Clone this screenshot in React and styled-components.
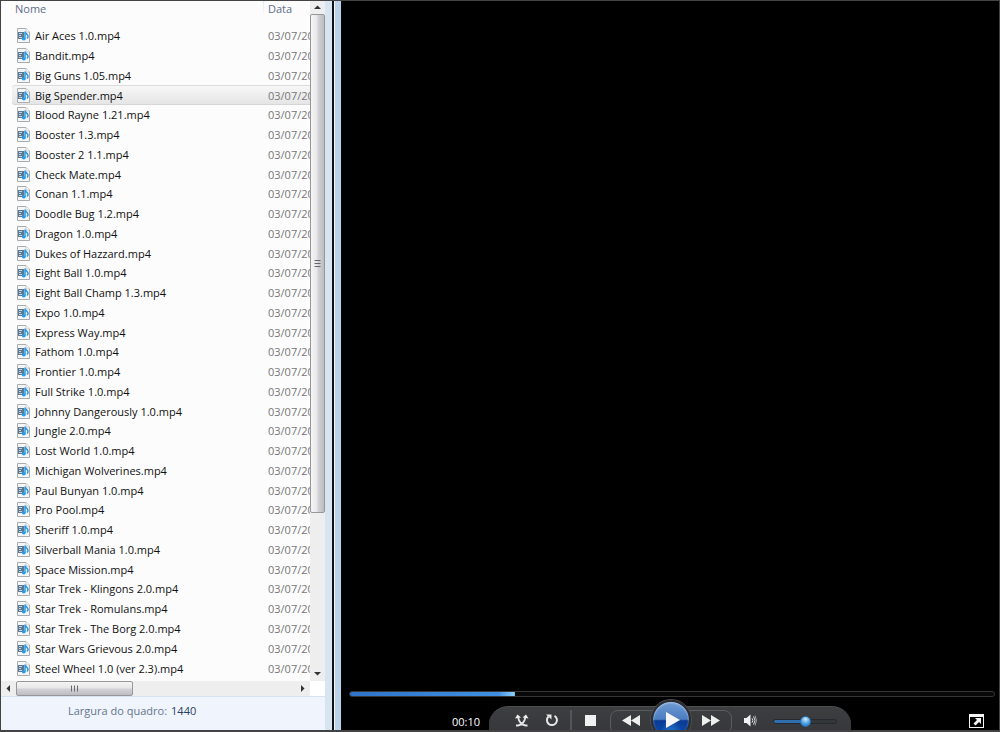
import React, { useState } from 'react';
import styled, { createGlobalStyle } from 'styled-components';

const GlobalStyle = createGlobalStyle`
  * {
    box-sizing: border-box;
  }
  body {
    margin: 0;
    background: #000;
    font-family: 'Open Sans', 'Noto Sans', sans-serif;
    font-size: 11px;
  }
  button {
    border: 0;
    padding: 0;
    background: none;
    cursor: pointer;
  }
`;

const Window = styled.div`
  display: flex;
  height: 100vh;
  min-height: 400px;
  overflow: hidden;
  border: solid #434343;
  border-width: 1px 1px 2px 1px;
`;

const Sidebar = styled.section`
  flex: 0 0 331px;
  display: flex;
  flex-direction: column;
  background: #fcfcfc;
  border-right: 7px solid #d7e5f2;
`;

const Browser = styled.div`
  flex: 1 1 auto;
  min-height: 0;
  display: grid;
  grid-template-columns: 1fr 15px;
  grid-template-rows: minmax(0, 1fr) 15px;
`;

const ListArea = styled.div`
  overflow: hidden;
  padding-left: 11px;
  padding-bottom: 3px;
`;

const Table = styled.table`
  width: 100%;
  height: 100%;
  table-layout: fixed;
  border-collapse: separate;
  border-spacing: 0;
`;

const HeadCell = styled.th`
  width: ${props => props.$width || 'auto'};
  height: 25px;
  padding: 0 0 0 3px;
  vertical-align: top;
  text-align: left;
  font-weight: normal;
  line-height: 15px;
  color: #5d6c8b;

  & + & {
    padding-left: 5px;
    background: linear-gradient(#dfeaf5, #fcfcfc) no-repeat 0 0 / 1px 16px;
  }
`;

const Cell = styled.td`
  padding: 0;
  overflow: hidden;
  white-space: nowrap;
  line-height: 15px;
  color: ${props => (props.$muted ? '#777' : '#111')};
  padding-left: 5px;
`;

const Row = styled.tr`
  cursor: default;

  ${Cell} {
    ${props => props.$selected && `
      background: linear-gradient(#f8f8f8, #e4e4e4);
      box-shadow: inset 0 1px #dcdcdc, inset 0 -1px #d6d6d6;
    `}
  }
  ${Cell}:first-child {
    border-radius: 3px 0 0 3px;
  }
`;

const FileName = styled.span`
  display: flex;
  align-items: center;
  gap: 5px;
`;

const ScrollBar = styled.div`
  display: flex;
  flex-direction: ${props => (props.$horizontal ? 'row' : 'column')};
  justify-content: space-between;
  background: #eeeeee;
  overflow: hidden;
`;

const ScrollButton = styled.button`
  flex: 0 0 ${props => props.$size || '15px'};
  display: flex;
  align-items: center;
  justify-content: center;
`;

const ScrollTrack = styled.div`
  flex: 1 1 auto;
  display: flex;
  flex-direction: inherit;
`;

const Thumb = styled.div`
  flex: 0 0 ${props => props.$length};
  display: flex;
  align-items: center;
  justify-content: center;
  border: 1px solid #979797;
  border-radius: 2px;
  background: linear-gradient(
    ${props => (props.$horizontal ? 'to bottom' : 'to right')},
    #f5f5f5, #e7e7e9 45%, #d2d2d6 55%, #bcbcc2
  );
`;

const Corner = styled.div`
  background: #fff;
`;

const Details = styled.footer`
  flex: 0 0 34px;
  display: flex;
  gap: 4px;
  padding: 6px 0 0 67px;
  line-height: 15px;
  color: #66758c;
  background: #f0f4fc;
  border-top: 1px solid #d5e2f0;

  strong {
    font-weight: normal;
    color: #2b4066;
  }
`;

const Divider = styled.div`
  flex: 0 0 9px;
  background: #b9d2ea;
  border-left: 2px solid #111;
  box-shadow: inset 1px 0 #f4f8fb;
`;

const Player = styled.section`
  flex: 1 1 auto;
  display: flex;
  flex-direction: column;
  min-width: 0;
  overflow: hidden;
  background: #000;
`;

const Video = styled.div`
  flex: 1 1 auto;
`;

const Range = styled.input`
  appearance: none;
  display: block;
  margin: 0;
  border-radius: 3px;
  outline: 0;
`;

const SeekBar = styled(Range)`
  height: 6px;
  margin: 0 4px 0 8px;
  border: 1px solid #353535;
  background: linear-gradient(to right, #2e74c8, #3f8fe0 90%, #8fd3fa) no-repeat #080808;
  background-size: ${props => props.$fill}% 100%;

  &::-webkit-slider-thumb {
    appearance: none;
    width: 1px;
    height: 4px;
  }
`;

const VolumeBar = styled(Range)`
  width: 64px;
  height: 5px;
  margin: 12px 0 0 8px;
  border: 1px solid #26292d;
  background: linear-gradient(#2f6fae, #2f6fae) no-repeat #34373a;
  background-size: ${props => props.$fill}% 100%;

  &::-webkit-slider-thumb {
    appearance: none;
    width: 11px;
    height: 11px;
    border-radius: 50%;
    border: 1px solid #2b70b5;
    background: radial-gradient(circle at 50% 25%, #d3ecfb, #4ba0e2 55%, #1b6fc6);
  }
`;

const Controls = styled.div`
  flex: 0 0 23px;
  display: grid;
  grid-template-columns: 1fr auto 1fr;
  margin-top: 9px;
`;

const Time = styled.time`
  justify-self: end;
  padding: 8px 9px 0 0;
  line-height: 15px;
  color: #fff;
`;

const Capsule = styled.div`
  display: flex;
  align-items: flex-start;
  height: 24px;
  padding: 0 14px 0 18px;
  border-top: 1px solid #4c4e50;
  border-radius: 20px 20px 0 0 / 18px 18px 0 0;
  background: linear-gradient(#3c3e40, #36383b);
`;

const ControlButton = styled.button`
  display: flex;
  align-items: center;
  justify-content: center;
  width: ${props => props.$width || '30px'};
  height: 20px;
  margin-top: ${props => props.$top || '3px'};
`;

const Separator = styled.span`
  width: 2px;
  height: 20px;
  margin: 3px;
  background: #53555d;
`;

const Transport = styled.div`
  display: flex;
  align-items: flex-start;
  height: 24px;
  margin: 3px 3px 0 5px;
  border: 1px solid #5a5c5e;
  border-radius: 8px;
`;

const PlayButton = styled.button`
  display: flex;
  align-items: center;
  justify-content: center;
  width: 40px;
  height: 40px;
  margin-top: -11px;
  border: 2px solid #2c2e31;
  border-radius: 50%;
  background:
    radial-gradient(ellipse at 50% 110%, rgba(60, 170, 255, 0.7), transparent 45%),
    linear-gradient(#6f9bd2, #4b7dc2 48%, #0b3b94 52%, #0e4fae);
  box-shadow: 0 0 0 1px #4d5053, inset 0 1px 2px #b5cff0;
`;

const FullScreenButton = styled.button`
  justify-self: end;
  width: 15px;
  height: 14px;
  margin: 8px 15px 0 0;
`;

const files = [
  'Air Aces 1.0.mp4',
  'Bandit.mp4',
  'Big Guns 1.05.mp4',
  'Big Spender.mp4',
  'Blood Rayne 1.21.mp4',
  'Booster 1.3.mp4',
  'Booster 2 1.1.mp4',
  'Check Mate.mp4',
  'Conan 1.1.mp4',
  'Doodle Bug 1.2.mp4',
  'Dragon 1.0.mp4',
  'Dukes of Hazzard.mp4',
  'Eight Ball 1.0.mp4',
  'Eight Ball Champ 1.3.mp4',
  'Expo 1.0.mp4',
  'Express Way.mp4',
  'Fathom 1.0.mp4',
  'Frontier 1.0.mp4',
  'Full Strike 1.0.mp4',
  'Johnny Dangerously 1.0.mp4',
  'Jungle 2.0.mp4',
  'Lost World 1.0.mp4',
  'Michigan Wolverines.mp4',
  'Paul Bunyan 1.0.mp4',
  'Pro Pool.mp4',
  'Sheriff 1.0.mp4',
  'Silverball Mania 1.0.mp4',
  'Space Mission.mp4',
  'Star Trek - Klingons 2.0.mp4',
  'Star Trek - Romulans.mp4',
  'Star Trek - The Borg 2.0.mp4',
  'Star Wars Grievous 2.0.mp4',
  'Steel Wheel 1.0 (ver 2.3).mp4',
];

const FileIcon = () => (
  <svg width="13" height="15" viewBox="0 0 13 15">
    <path d="M0.5 0.5h8.5l3.5 3.5v10.5h-12z" fill="#f4f6f7" stroke="#a9acaf" />
    <path d="M9 0.5v3.500h3.500" fill="#fff" stroke="#c4c7ca" />
    <path d="M1 4h6v7H1z" fill="#5d7891" />
    <path d="M2 5.500h3M2 7.500h2M2 9.500h3" stroke="#c6d6e3" />
    <path d="M8 3.500v7M8 4c0.500 2 3 2 3 4.500c0 1-0.500 1.500-1 2" fill="none" stroke="#2b9ae6" strokeWidth="1.500" />
    <ellipse cx="6.800" cy="10.800" rx="2" ry="1.600" fill="#2b9ae6" />
  </svg>
);

const Arrow = ({ d }) => (
  <svg width="7" height="7" viewBox="0 0 7 7">
    <path d={d} fill="#333" />
  </svg>
);

const Grip = ({ d }) => (
  <svg width="7" height="7" viewBox="0 0 7 7">
    <path d={d} stroke="#66686c" />
  </svg>
);

const ShuffleIcon = () => (
  <svg width="14" height="13" viewBox="0 0 14 13">
    <path
      d="M1 11.500h2C7 11 9.500 8 10.500 3M12.500 11.500h-2C6.500 11 4 8 3 3"
      fill="none"
      stroke="#e4e4e4"
      strokeWidth="1.800"
    />
    <path d="M0 4.500L2.500 0.500L6 3.500zM7.500 3.500L11 0.500L13.500 4.500z" fill="#f0f0f0" />
  </svg>
);

const RepeatIcon = () => (
  <svg width="14" height="14" viewBox="0 0 14 14">
    <path d="M9.500 2.800A5 5 0 1 1 3.500 3.500" fill="none" stroke="#e8e8e8" strokeWidth="2" />
    <path d="M1 1.500h5.500v5z" fill="#e8e8e8" />
  </svg>
);

const VolumeIcon = () => (
  <svg width="15" height="13" viewBox="0 0 15 13">
    <path d="M1 4h2.500L7.500 0.500v12L3.500 9H1z" fill="#f2f2f2" />
    <path d="M9 4.300q1.800 2.200 0 4.400M10.500 2.500q3 4 0 8" fill="none" stroke="#dedede" />
    <path d="M12 1.500q3 5 0 10" fill="none" stroke="#a5a5a5" />
  </svg>
);

function FileList() {
  const [selected, setSelected] = useState('Big Spender.mp4');

  return (
    <Table>
      <thead>
        <tr>
          <HeadCell>Nome</HeadCell>
          <HeadCell $width="47px">Data</HeadCell>
        </tr>
      </thead>
      <tbody>
        {files.map(name => (
          <Row key={name} $selected={name === selected} onClick={() => setSelected(name)}>
            <Cell>
              <FileName>
                <FileIcon />
                {name}
              </FileName>
            </Cell>
            <Cell $muted>03/07/20</Cell>
          </Row>
        ))}
      </tbody>
    </Table>
  );
}

function PlayerControls() {
  const [volume, setVolume] = useState(50);

  return (
    <Controls>
      <Time>00:10</Time>
      <Capsule>
        <ControlButton aria-label="Shuffle"><ShuffleIcon /></ControlButton>
        <ControlButton aria-label="Repeat"><RepeatIcon /></ControlButton>
        <Separator />
        <ControlButton aria-label="Stop">
          <svg width="11" height="11"><rect width="11" height="11" fill="#f0f0f0" /></svg>
        </ControlButton>
        <Transport>
          <ControlButton aria-label="Previous" $width="40px" $top="-1px">
            <svg width="18" height="11"><path d="M9 0v11L0 5.500zM18 0v11L9 5.500z" fill="#eee" /></svg>
          </ControlButton>
          <PlayButton aria-label="Play">
            <svg width="17" height="18"><path d="M3 1L17 9L3 17z" fill="#f6f6f6" /></svg>
          </PlayButton>
          <ControlButton aria-label="Next" $width="40px" $top="-1px">
            <svg width="18" height="11"><path d="M0 0v11L9 5.500zM9 0v11L18 5.500z" fill="#eee" /></svg>
          </ControlButton>
        </Transport>
        <ControlButton aria-label="Mute"><VolumeIcon /></ControlButton>
        <VolumeBar
          type="range"
          aria-label="Volume"
          value={volume}
          $fill={volume}
          onChange={event => setVolume(Number(event.target.value))}
        />
      </Capsule>
      <FullScreenButton aria-label="Full screen">
        <svg width="15" height="14" viewBox="0 0 15 14" display="block">
          <path d="M0 0h15v14H0zM1 3v10h13V3z" fill="#f4f4f4" fillRule="evenodd" />
          <path d="M6 4h6v6l-2-2l-3.500 3.500l-2-2L8 6z" fill="#f4f4f4" />
        </svg>
      </FullScreenButton>
    </Controls>
  );
}

export default function App() {
  const [position, setPosition] = useState(256);

  return (
    <>
      <GlobalStyle />
      <Window>
        <Sidebar>
          <Browser>
            <ListArea>
              <FileList />
            </ListArea>
            <ScrollBar>
              <ScrollButton aria-label="Scroll up" $size="13px"><Arrow d="M0 5h7L3.500 1.500z" /></ScrollButton>
              <ScrollTrack>
                <Thumb $length="76.5%"><Grip d="M0.500 0.500h6M0.500 3.500h6M0.500 6.500h6" /></Thumb>
              </ScrollTrack>
              <ScrollButton aria-label="Scroll down"><Arrow d="M0 2h7L3.500 5.500z" /></ScrollButton>
            </ScrollBar>
            <ScrollBar $horizontal>
              <ScrollButton aria-label="Scroll left"><Arrow d="M5 0v7L1.500 3.500z" /></ScrollButton>
              <ScrollTrack>
                <Thumb $horizontal $length="42%"><Grip d="M0.500 0.500v6M3.500 0.500v6M6.500 0.500v6" /></Thumb>
              </ScrollTrack>
              <ScrollButton aria-label="Scroll right"><Arrow d="M2 0v7L5.500 3.500z" /></ScrollButton>
            </ScrollBar>
            <Corner />
          </Browser>
          <Details>
            <span>Largura do quadro:</span>
            <strong>1440</strong>
          </Details>
        </Sidebar>
        <Divider />
        <Player>
          <Video />
          <SeekBar
            type="range"
            aria-label="Seek"
            max={1000}
            value={position}
            $fill={position / 10}
            onChange={event => setPosition(Number(event.target.value))}
          />
          <PlayerControls />
        </Player>
      </Window>
    </>
  );
}
